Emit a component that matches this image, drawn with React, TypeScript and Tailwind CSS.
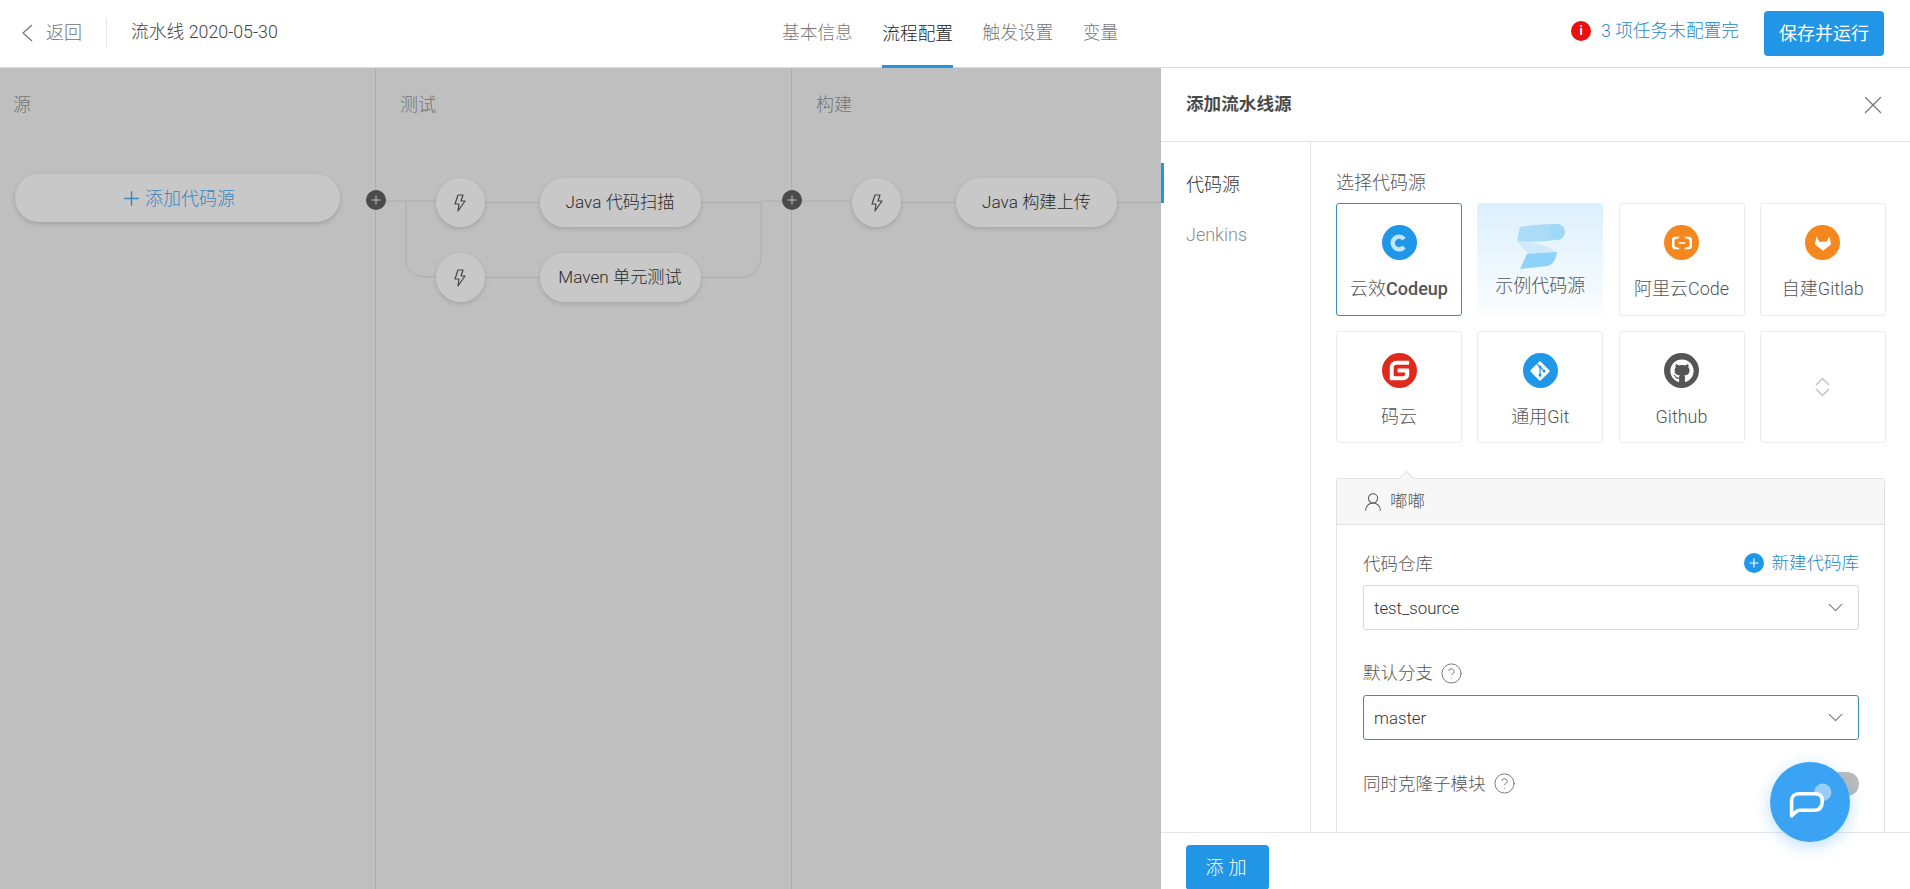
import { ChevronDown, CircleHelp, Plus, UserRound, X } from "lucide-react";
import type { ReactNode } from "react";
import { FaGitAlt, FaGithub } from "react-icons/fa";
import { SiAlibabacloud, SiGitee } from "react-icons/si";

const font = "font-['Roboto','Noto_Sans_CJK_SC',sans-serif]";

function IconDisc({ className, children }: { className: string; children: ReactNode }) {
  return (
    <span className={`flex size-[35px] items-center justify-center rounded-full ${className}`}>
      {children}
    </span>
  );
}

function CodeupLogo() {
  return (
    <IconDisc className="bg-[#1f97e8]">
      <svg viewBox="0 0 20 20" className="size-[22px]" fill="none">
        <path d="M14.600 6.400a5.800 5.800 0 1 0 0 7.200" stroke="#bfe6fc" strokeWidth="4" />
      </svg>
    </IconDisc>
  );
}

function SampleLogo() {
  return (
    <svg viewBox="0 0 50 48" className="h-[48px] w-[50px]">
      <path d="M2 19 C14 20 30 21 42 31 L14 33 Z" fill="#cfe9fb" />
      <path d="M5 5 C15 3 30 2 42 2 L40 18 C28 20 12 20 2 19 Z" fill="#aadcf8" />
      <path d="M12 32 L42 30 C41 38 38 42 33 44 L5 47 Z" fill="#8fd2f9" />
      <circle cx="42" cy="10" r="8" fill="#9fd8f9" />
    </svg>
  );
}

function GitlabMark() {
  return (
    <svg viewBox="0 0 20 20" className="size-[18px]" fill="#ffffff">
      <path d="M3 2.500 L5.800 8.500 H14.200 L17 2.500 L19 11.500 L10 18.500 L1 11.500 Z" />
    </svg>
  );
}

const sources: { name: ReactNode; icon: ReactNode; active?: boolean; sample?: boolean }[] = [
  {
    name: (
      <>
        云效<span className="font-medium">Codeup</span>
      </>
    ),
    icon: <CodeupLogo />,
    active: true,
  },
  { name: "示例代码源", icon: <SampleLogo />, sample: true },
  {
    name: "阿里云Code",
    icon: (
      <IconDisc className="bg-[#f5871f]">
        <SiAlibabacloud className="size-[20px] text-white" />
      </IconDisc>
    ),
  },
  {
    name: "自建Gitlab",
    icon: (
      <IconDisc className="bg-[#f5871f]">
        <GitlabMark />
      </IconDisc>
    ),
  },
  { name: "码云", icon: <SiGitee className="size-[35px] text-[#e0281b]" /> },
  {
    name: "通用Git",
    icon: (
      <IconDisc className="bg-[#1f97e8]">
        <FaGitAlt className="size-[22px] text-white" />
      </IconDisc>
    ),
  },
  {
    name: "Github",
    icon: (
      <IconDisc className="bg-[#555555]">
        <FaGithub className="size-[24px] text-white" />
      </IconDisc>
    ),
  },
];

function SourceCard({ name, icon, active, sample }: (typeof sources)[number]) {
  if (sample) {
    return (
      <div className="relative flex h-[113px] flex-col items-center rounded-[3px] bg-gradient-to-b from-[#dcf0fd] to-[#fbfdff] pt-[19px] text-[18px] text-[#555555]">
        {icon}
        <span className="absolute top-[70px] leading-[26px]">{name}</span>
      </div>
    );
  }
  return (
    <div
      className={`flex h-full flex-col items-center rounded-[3px] border pt-[21px] text-[18px] text-[#555555] ${
        active ? "border-[#3a8fb0]" : "border-[#ececec]"
      }`}
    >
      {icon}
      <span className="mt-[15.500px] leading-[26px]">{name}</span>
    </div>
  );
}

function BoltIcon() {
  return (
    <svg viewBox="0 0 14 18" className="h-[18px] w-[14px]" fill="none" stroke="#444444" strokeWidth="1.2" strokeLinejoin="round">
      <path d="M5 1 L2 10 H6 L5 17 L12 7 H8 L10 1 Z" />
    </svg>
  );
}

function JobRow({ label }: { label: string }) {
  return (
    <div className="flex items-center">
      <span className="flex size-[49px] items-center justify-center rounded-full bg-[#c8c8c8] shadow-[0_2px_5px_rgba(0,0,0,0.14)]">
        <BoltIcon />
      </span>
      <span className="ml-[55px] flex h-[49px] w-[161px] items-center justify-center rounded-full bg-[#c8c8c8] text-[17.200px] text-[#2a2a2a] shadow-[0_2px_5px_rgba(0,0,0,0.14)]">
        {label}
      </span>
    </div>
  );
}

function AddNode() {
  return (
    <span className="absolute top-[122px] right-[-10.500px] z-10 flex size-[20px] items-center justify-center rounded-full bg-[#4a4a4a]">
      <Plus className="size-[14px] text-[#d8d8d8]" strokeWidth={1.5} />
    </span>
  );
}

function Canvas() {
  return (
    <div className="relative flex h-full w-[1161px] shrink-0 bg-[#bfbfbf]">
      {/* 连接线 */}
      <svg className="absolute inset-0 size-full" fill="none" stroke="#adadad" strokeWidth="1">
        <path d="M385 133 H436 M406 133 V194 Q406 209 433 209 H436" />
        <path d="M484 134.500 H540 M484 209.500 H540 M700 134.500 H761 M700 209.500 H738 Q761 209.500 761 186 V133 H791" />
        <path d="M800 133 H851 M900 134.500 H955 M1117 134.500 H1161" />
      </svg>

      <section className="relative h-full w-[376px] border-r border-[#adadad] pt-[24px]">
        <p className="pl-[13px] text-[18px] leading-[26px] text-[#737373]">源</p>
        <button className="relative mt-[56px] ml-[15px] flex h-[48px] w-[325px] items-center justify-center gap-[2px] rounded-full bg-[#c8c8c8] text-[18px] text-[#3a87bf] shadow-[0_2px_5px_rgba(0,0,0,0.16)]">
          <Plus className="size-[23px]" strokeWidth={1.5} />
          添加代码源
        </button>
        <AddNode />
      </section>

      <section className="relative h-full w-[416px] border-r border-[#adadad] pt-[24px]">
        <p className="pl-[24px] text-[18px] leading-[26px] text-[#737373]">测试</p>
        <div className="relative mt-[60px] ml-[59.500px] flex flex-col gap-[26px]">
          <JobRow label="Java 代码扫描" />
          <JobRow label="Maven 单元测试" />
        </div>
        <AddNode />
      </section>

      <section className="relative h-full flex-1 pt-[24px]">
        <p className="pl-[24px] text-[18px] leading-[26px] text-[#737373]">构建</p>
        <div className="relative mt-[60px] ml-[60px]">
          <JobRow label="Java 构建上传" />
        </div>
      </section>
    </div>
  );
}

function SelectBox({ value, focused }: { value: string; focused?: boolean }) {
  return (
    <div
      className={`flex h-[45px] items-center justify-between rounded-[3px] border px-[10px] text-[16.800px] text-[#333333] ${
        focused ? "border-[#3a8fb0]" : "border-[#d8d8d8]"
      }`}
    >
      <span className="pt-[1px]">{value}</span>
      <ChevronDown className="size-[25px] text-[#777777]" strokeWidth={1} />
    </div>
  );
}

function Help() {
  return <CircleHelp className="size-[23px] text-[#777777]" strokeWidth={1} />;
}

function SourcePanel() {
  return (
    <aside className="flex h-full flex-1 flex-col bg-white">
      <div className="flex h-[74px] shrink-0 items-center justify-between border-b border-[#e2e2e2] pr-[23px] pl-[25px]">
        <h2 className="text-[17.600px] font-bold text-[#4a4a4a]">添加流水线源</h2>
        <X className="size-[30px] text-[#777777]" strokeWidth={1} />
      </div>

      <div className="flex min-h-0 flex-1">
        <nav className="relative w-[150px] shrink-0 border-r border-[#e2e2e2] pt-[23px] text-[18px] leading-[26px]">
          <span className="absolute top-[21px] left-0 h-[40px] w-[3px] bg-[#2496e0]" />
          <div className="flex h-[40px] items-center pl-[25px] text-[#333333]">代码源</div>
          <div className="mt-[10px] flex h-[40px] items-center pl-[25px] text-[#8c8c8c]">Jenkins</div>
        </nav>

        <div className="min-w-0 flex-1 overflow-hidden pt-[28px] pr-[25px] pl-[25px]">
          <p className="text-[18px] leading-[26px] text-[#555555]">选择代码源</p>
          <div className="mt-[7px] grid grid-cols-[126px_126px_126px_126px] grid-rows-[113px_111.500px] gap-x-[15.250px] gap-y-[15px]">
            {sources.map((s, i) => (
              <SourceCard key={i} {...s} />
            ))}
            <div className="flex items-center justify-center rounded-[3px] border border-[#ececec]">
              <svg viewBox="0 0 15 20" className="h-[20px] w-[15px]" fill="none" stroke="#c4c4c4" strokeWidth="1.5">
                <path d="M1 8 L7.500 1.500 L14 8 M1 12 L7.500 18.500 L14 12" />
              </svg>
            </div>
          </div>

          <div className="relative mt-[35.500px] h-[400px] w-[549px] rounded-t-[3px] border-x border-t border-[#e2e2e2]">
            <span className="absolute top-[-6px] left-[64px] size-[11px] rotate-45 border-t border-l border-[#e2e2e2] bg-[#f7f7f7]" />
            <div className="relative flex h-[46px] items-center gap-[6px] border-b border-[#e2e2e2] bg-[#f7f7f7] pl-[25px] text-[17.500px] text-[#555555]">
              <UserRound className="size-[22px]" strokeWidth={1.1} />
              嘟嘟
            </div>
            <div className="pt-[25px] pr-[25px] pl-[26px] text-[17.500px] leading-[26px] text-[#555555]">
              <div className="flex items-center justify-between">
                <span className="pt-[1px]">代码仓库</span>
                <span className="flex items-center gap-[8px] pb-[1px] text-[#2389cc]">
                  <span className="flex size-[20px] items-center justify-center rounded-full bg-[#1f97e8]">
                    <Plus className="size-[14px] text-white" strokeWidth={2} />
                  </span>
                  新建代码库
                </span>
              </div>
              <div className="mt-[8px]">
                <SelectBox value="test_source" />
              </div>
              <div className="mt-[30px] flex items-center gap-[7px]">
                默认分支
                <Help />
              </div>
              <div className="mt-[8.500px]">
                <SelectBox value="master" focused />
              </div>
              <div className="mt-[31px] flex items-center justify-between">
                <span className="flex items-center gap-[7px]">
                  同时克隆子模块
                  <Help />
                </span>
                <span className="h-[24px] w-[46px] rounded-full bg-[#bbbbbb]" />
              </div>
            </div>
          </div>
        </div>
      </div>

      <div className="flex h-[57px] shrink-0 items-start border-t border-[#e6e6e6] pt-[12px] pl-[25px]">
        <button className="h-[45px] w-[83px] rounded-[4px] bg-[#2196e6] pl-[2px] text-[18px] tracking-[5px] text-white">
          添加
        </button>
      </div>
    </aside>
  );
}

export default function App() {
  return (
    <div className={`relative h-[889px] w-[1910px] overflow-hidden bg-white font-light ${font}`}>
      <header className="flex h-[68px] items-center border-b border-[#dcdcdc] bg-white">
        <div className="flex w-[782px] shrink-0 items-center pb-[2px] pl-[21px] text-[18px]">
          <svg viewBox="0 0 12 18" className="h-[18px] w-[12px]" fill="none" stroke="#777777" strokeWidth="1.2">
            <path d="M11 1 L2 9 L11 17" />
          </svg>
          <span className="ml-[13px] text-[#707070]">返回</span>
          <span className="mx-[24px] h-[30px] w-px bg-[#e6e6e6]" />
          <span className="text-[17.800px] text-[#444444]">流水线 2020-05-30</span>
        </div>
        <nav className="flex h-full gap-[29.500px] text-[17.700px] text-[#777777]">
          <a className="flex items-center">基本信息</a>
          <a className="-mb-px flex items-center border-b-[3px] border-[#2496e0] pt-[3px] text-[#222222]">
            流程配置
          </a>
          <a className="flex items-center">触发设置</a>
          <a className="flex items-center">变量</a>
        </nav>
        <div className="ml-auto flex items-center pr-[26px]">
          <div className="mb-[4px] flex items-center">
            <span className="flex size-[20px] items-center justify-center rounded-full bg-[#ea0e0e] text-[12px] font-bold text-white">
              i
            </span>
            <span className="mr-[25px] ml-[10px] text-[17.700px] text-[#2389cc]">3 项任务未配置完</span>
          </div>
          <button className="h-[45px] w-[120px] rounded-[4px] bg-[#2196e6] text-[18px] font-normal text-white">
            保存并运行
          </button>
        </div>
      </header>

      <main className="flex h-[821px]">
        <Canvas />
        <SourcePanel />
      </main>

      {/* 在线客服浮标 */}
      <button className="absolute top-[762px] left-[1770px] flex size-[80px] items-center justify-center rounded-full bg-[#3ba3f3] shadow-[0_4px_16px_rgba(59,163,243,0.35)]">
        <svg viewBox="0 0 46 40" className="h-[41px] w-[47px]">
          <circle cx="35" cy="10" r="8.500" fill="#a9d5f7" opacity="0.85" />
          <path
            d="M12 11.500 H27 C32 11.500 34.500 14 34.500 18 C34.500 24 32 27.500 27 27.500 H12 C9.500 27.500 8 30 4.500 33 C4.500 28 4.500 24 4.500 18 C4.500 14 7.500 11.500 12 11.500 Z"
            fill="#3ba3f3"
            stroke="#ffffff"
            strokeWidth="3.500"
            strokeLinejoin="round"
          />
        </svg>
      </button>
    </div>
  );
}
